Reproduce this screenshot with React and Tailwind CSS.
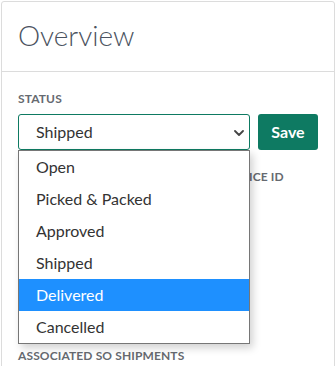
const options = ['Open', 'Picked & Packed', 'Approved', 'Shipped', 'Delivered', 'Cancelled'];

function Label({ children }) {
  return (
    <div className="text-[12px] leading-4 font-bold uppercase text-[#666a70] tracking-[0.01em]">
      {children}
    </div>
  );
}

export default function App() {
  const highlighted = 'Delivered';

  return (
    <div className="min-h-screen bg-white p-px font-['Lato',sans-serif]">
      <div className="border border-[#dcdcdc] rounded-[3px] bg-white h-[370px]">
        {/* Header */}
        <div className="h-[70px] border-b border-[#dcdcdc] pl-[16px] pt-[16px]">
          <h1 className="text-[28px] leading-[34px] font-light text-[#4b5360]">Overview</h1>
        </div>

        {/* Body */}
        <div className="pl-[16px] pr-[16px] pt-[19px]">
          <div className="mb-[7px]">
            <Label>Status</Label>
          </div>

          <div className="relative flex gap-2">
            <div className="w-[232px] h-[36px] border border-[#0e7a62] rounded-[3px] flex items-center justify-between pl-[17px] pr-[4px] text-[16px] text-[#333]">
              <span>Shipped</span>
              <svg width="10" height="6" viewBox="0 0 10 6" fill="none" className="mr-[1px] mt-[2px]">
                <path d="M1 1 L5 5 L9 1" stroke="#444" strokeWidth="1.8" strokeLinecap="round" strokeLinejoin="round" />
              </svg>
            </div>
            <button className="w-[60px] h-[36px] bg-[#0e7a62] rounded-[3px] text-white text-[16px] font-bold">
              Save
            </button>

            {/* Open dropdown menu */}
            <div className="absolute left-0 top-[36px] w-[232px] bg-white border border-[#767676] shadow-[3px_4px_8px_rgba(0,0,0,0.18)] z-10">
              {options.map((opt) => (
                <div
                  key={opt}
                  className={`h-[32px] flex items-center pl-[17px] text-[16px] ${
                    opt === highlighted ? 'bg-[#1e90ff] text-white' : 'text-[#333]'
                  }`}
                >
                  {opt}
                </div>
              ))}
            </div>
          </div>

          {/* Fields behind the menu */}
          <div className="grid grid-cols-[192px_1fr] gap-x-2 mt-[19px]">
            <div className="h-[160px]" />
            <div className="h-[160px]">
              <Label>Invoice ID</Label>
            </div>
          </div>

          <div className="mt-[19px]">
            <Label>Associated SO Shipments</Label>
          </div>
        </div>
      </div>
    </div>
  );
}
